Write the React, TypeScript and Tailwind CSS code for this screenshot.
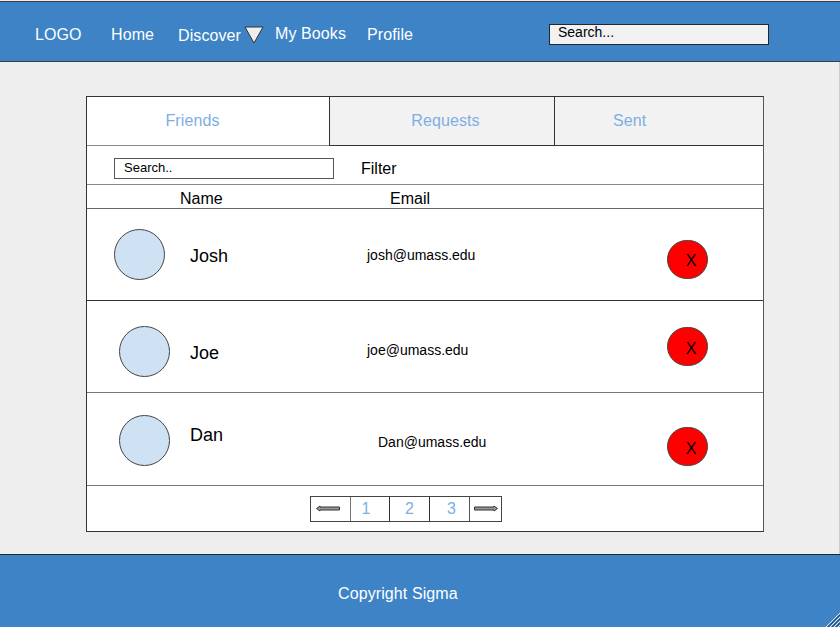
import React from 'react';

interface Friend {
  name: string;
  email: string;
  rowClass: string;
  avatarClass: string;
  nameClass: string;
  emailClass: string;
  removeClass: string;
}

const friends: Friend[] = [
  {
    name: 'Josh',
    email: 'josh@umass.edu',
    rowClass: 'h-[92px] border-b border-[#333]',
    avatarClass: 'ml-[27px] mr-[25px]',
    nameClass: 'w-[177px] mt-[3px]',
    emailClass: 'w-[300px] mt-[1px]',
    removeClass: 'mt-[9px]',
  },
  {
    name: 'Joe',
    email: 'joe@umass.edu',
    rowClass: 'h-[92px] border-b border-[#777]',
    avatarClass: 'ml-[32px] mr-[20px] mt-[10px]',
    nameClass: 'w-[177px] mt-[12px]',
    emailClass: 'w-[300px] mt-[7px]',
    removeClass: '',
  },
  {
    name: 'Dan',
    email: 'Dan@umass.edu',
    rowClass: 'h-[93px] border-b border-[#777]',
    avatarClass: 'ml-[32px] mr-[20px] mt-[3px]',
    nameClass: 'w-[188px] mb-[9px]',
    emailClass: 'w-[289px] mt-[6px]',
    removeClass: 'mt-[15px]',
  },
];

function ArrowLeft() {
  return (
    <svg width="24" height="7" viewBox="0 0 24 7">
      <path d="M0.5 3.5 L4 1 V2 H23.5 V5 H4 V6 Z" fill="#999" stroke="#333" strokeWidth="1" />
    </svg>
  );
}

function ArrowRight() {
  return (
    <svg width="24" height="7" viewBox="0 0 24 7">
      <path d="M23.5 3.5 L20 1 V2 H0.5 V5 H20 V6 Z" fill="#999" stroke="#333" strokeWidth="1" />
    </svg>
  );
}

export default function App() {
  return (
    <div className="relative w-[840px] h-[627px] overflow-hidden flex flex-col bg-[#eeeeee] font-['Liberation_Sans',Arial,sans-serif] text-black">
      <header className="mt-[1px] h-[61px] pt-[5px] shrink-0 flex items-center bg-[#3d83c6] border-t border-b border-[#3a3f46] text-white text-base tracking-[0.1px]">
        <span className="ml-[35px] w-[76px] mt-[2px]">LOGO</span>
        <span className="w-[67px] mt-[2px]">Home</span>
        <span className="mt-[4px] w-[66px]">Discover</span>
        <svg width="20" height="18" viewBox="0 0 20 18" className="mb-[-1px]">
          <path d="M1 1 H19 L10 17 Z" fill="#eeeeee" stroke="#333" strokeWidth="1" />
        </svg>
        <span className="ml-[11px] w-[92px]">My Books</span>
        <span className="w-[182px] mt-[2px]">Profile</span>
        <div className="w-[220px] h-[21px] bg-[#f2f2f2] border border-[#23272d] pl-[8px] text-sm leading-[14px] tracking-normal text-black">
          Search...
        </div>
      </header>

      <main className="flex-1 min-h-0 pt-[34px] pl-[86px] border-r border-[#ccc]">
        <div className="w-[678px] h-[436px] bg-white border border-[#333] border-r-[#555] flex flex-col">
          <div className="h-[49px] shrink-0 flex text-base text-[#7eaee2] tracking-[0.1px]">
            <div className="w-[242px] flex items-center justify-center border-b border-[#888] pr-[31px]">
              Friends
            </div>
            <div className="w-[225px] flex items-center justify-center bg-[#f2f2f2] border-l border-b border-[#333] pl-[7px]">
              Requests
            </div>
            <div className="flex-1 flex items-center bg-[#f2f2f2] border-l border-b border-[#333] pl-[58px]">
              Sent
            </div>
          </div>

          <div className="h-[39px] shrink-0 flex items-center border-b border-[#888] pl-[27px]">
            <div className="w-[220px] h-[21px] border border-[#555] pl-[9px] text-[13px] leading-[18px] mt-[7px]">
              Search..
            </div>
            <span className="ml-[27px] mt-[8px] text-base">Filter</span>
          </div>

          <div className="h-[24px] shrink-0 flex items-center border-b border-[#666] text-base">
            <span className="ml-[93px] mt-[5px] w-[210px]">Name</span>
            <span className="mt-[5px]">Email</span>
          </div>

          {friends.map((friend) => (
            <div key={friend.name} className={`shrink-0 flex items-center ${friend.rowClass}`}>
              <div className={`w-[51px] h-[51px] rounded-full bg-[#cfe2f3] border border-[#444] shrink-0 ${friend.avatarClass}`} />
              <span className={`text-lg ${friend.nameClass}`}>{friend.name}</span>
              <span className={`text-sm ${friend.emailClass}`}>{friend.email}</span>
              <div className={`w-[41px] h-[39px] rounded-full bg-[#ff0000] border border-[#444] text-base flex items-center justify-center pl-[7px] pt-[4px] shrink-0 ${friend.removeClass}`}>
                X
              </div>
            </div>
          ))}

          <div className="flex-1 flex items-center pl-[223px]">
            <div className="h-[26px] flex border border-[#444] text-base text-[#7eaee2]">
              <div className="w-[39px] flex items-center justify-center pr-[6px]"><ArrowLeft /></div>
              <div className="w-[39px] flex items-center justify-center border-l border-[#777] pr-[8px]">1</div>
              <div className="w-[40px] flex items-center justify-center border-l border-[#333]">2</div>
              <div className="w-[40px] flex items-center justify-center border-l border-[#333] pl-[4px]">3</div>
              <div className="w-[32px] flex items-center justify-center border-l border-[#555]"><ArrowRight /></div>
            </div>
          </div>
        </div>
      </main>

      <footer className="h-[73px] pt-[6px] shrink-0 flex items-center bg-[#3d83c6] border-t border-[#23272d] pl-[338px] text-base text-white tracking-[0.1px]">
        Copyright Sigma
      </footer>

      <svg width="14" height="14" viewBox="0 0 14 14" className="absolute right-0 bottom-0">
        <path d="M0 14 L14 0 M4 14 L14 4 M8 14 L14 8 M12 14 L14 12" stroke="#dfe6ee" strokeWidth="1" />
        <path d="M2 14 L14 2 M6 14 L14 6 M10 14 L14 10" stroke="#33475c" strokeWidth="1" />
      </svg>
    </div>
  );
}
